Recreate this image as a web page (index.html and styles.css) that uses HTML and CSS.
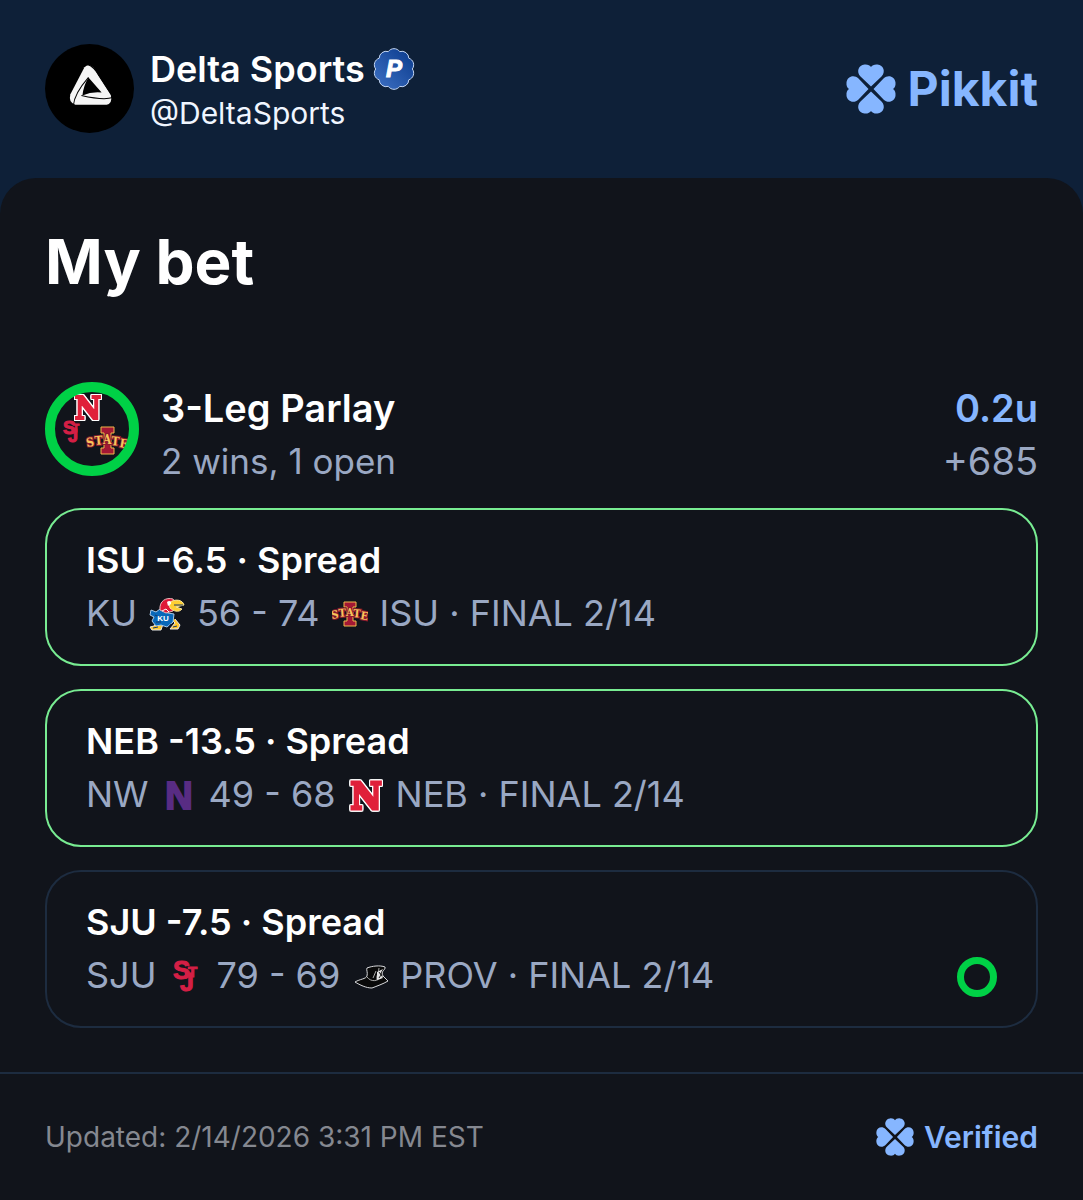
FILE: index.html
```html
<!DOCTYPE html>
<html lang="en">
<head>
    <meta charset="UTF-8">
    <meta name="viewport" content="width=device-width, initial-scale=1.0">
    <title>My bet - Pikkit</title>
    <link rel="stylesheet" href="styles.css">
</head>
<body>
    <header class="header">
        <svg class="avatar" viewBox="0 0 88 88" role="img" aria-label="Delta Sports logo">
            <circle cx="44" cy="44" r="44" fill="#000"/>
            <path d="M39 23Q44 18 49 25L65 50Q67 59 61 60H30Q23 58 25 50Z" fill="#f5f5f5"/>
            <path d="M43 33L56 48Q46 47 37 51Q38 41 43 33Z" fill="#000"/>
            <path d="M42 20Q49 23 53 31L66 51M67 53Q58 56 36 51M28 61Q29 49 43 33" fill="none" stroke="#000" stroke-width="1"/>
        </svg>
        <div class="user">
            <div class="user-name">
                Delta Sports
                <svg class="badge" viewBox="0 0 42 42" role="img" aria-label="Pro">
                    <defs>
                        <linearGradient id="badgeFill" x1="0" y1="1" x2="1" y2="0">
                            <stop offset="0" stop-color="#3f72c5"/>
                            <stop offset="1" stop-color="#09398b"/>
                        </linearGradient>
                    </defs>
                    <path d="M39.300 21A7 7 0 0 1 35.800 31.800A7 7 0 0 1 26.700 38.400A7 7 0 0 1 15.300 38.400A7 7 0 0 1 6.200 31.800A7 7 0 0 1 2.700 21A7 7 0 0 1 6.200 10.200A7 7 0 0 1 15.300 3.600A7 7 0 0 1 26.700 3.600A7 7 0 0 1 35.800 10.200A7 7 0 0 1 39.300 21Z" fill="url(#badgeFill)" stroke="#c3d6f4" stroke-width="1" stroke-linejoin="round"/>
                    <text class="block" x="21" y="29" font-size="24" font-style="italic" text-anchor="middle" fill="#fff" stroke="#fff" stroke-width="1">P</text>
                </svg>
            </div>
            <div class="user-handle">@DeltaSports</div>
        </div>
        <div class="brand">
            <svg class="brand-icon" viewBox="0 0 50 50" aria-hidden="true">
                <g id="clover">
                    <path id="leaf" d="M25 22.500L14.500 12.500C10 8 12.500 1 18.500 .5C21.500 .2 24 1.200 25 3C26 1.200 28.500 .2 31.500 .5C37.500 1 40 8 35.500 12.500Z"/>
                    <use href="#leaf" transform="rotate(90 25 25)"/>
                    <use href="#leaf" transform="rotate(180 25 25)"/>
                    <use href="#leaf" transform="rotate(270 25 25)"/>
                </g>
            </svg>
            Pikkit
        </div>
    </header>

    <main class="panel">
        <h1>My bet</h1>

        <section class="parlay">
            <svg class="parlay-icon" viewBox="0 0 94 94" aria-hidden="true">
                <text class="slab neb" x="43" y="37" font-size="32" text-anchor="middle">N</text>
                <text class="block sju" font-size="19"><tspan x="18" y="52">S</tspan><tspan x="28" y="50" font-size="10">T</tspan><tspan x="23" y="60" font-size="18">J</tspan></text>
                <path d="M56 45H69V51H66V66H69V72H56V66H59V51H56Z" fill="#a31734" stroke="#f2b84b" stroke-width="1"/>
                <text class="slab state" x="42 50 58 66 74" y="65 63 62 63 65" rotate="-10 -5 0 5 10" font-size="12">STATE</text>
                <circle cx="47" cy="47" r="42" fill="none" stroke="#00d146" stroke-width="10"/>
            </svg>
            <div class="parlay-info">
                <h2>3-Leg Parlay</h2>
                <p>2 wins, 1 open</p>
            </div>
            <div class="parlay-odds">
                <div class="units">0.2u</div>
                <div class="odds">+685</div>
            </div>
        </section>

        <ul class="legs">
            <li class="leg won">
                <div>
                    <h3>ISU -6.5 · Spread</h3>
                    <p class="score">
                        KU
                        <svg viewBox="0 0 36 36" aria-hidden="true">
                            <path d="M9 25L5 30L1 31L3 34H12L14 28M23 24L26 27L21 33H29L31 29L26 23" fill="#ffc82d" stroke="#e8e8e8" stroke-width="1"/>
                            <path d="M2 14L7 16L11 13L19 17L25 18L24 26L18 31L12 29L7 30L3 25L5 21L1 19Z" fill="#0868b9" stroke="#a9c9e8" stroke-width="1"/>
                            <path d="M11 14C10 5 17 1 24 3L27 8L24 15L17 17Z" fill="#df1938" stroke="#e8b9bd" stroke-width="1"/>
                            <path d="M20 7C26 2 34 4 35 9L27 11L33 13C30 17 24 15 21 12Z" fill="#ffcf32" stroke="#f6e39d" stroke-width="1"/>
                            <path d="M18 6C20 4 23 5 22 8L19 10Z" fill="#fff"/>
                            <path d="M25 9L34 9M6 19L10 21M7 26L12 26M22 28L19 31M4 32L9 31M24 31L28 30" fill="none" stroke="#183668" stroke-width="1"/>
                            <path d="M13 15L17 13L20 16" fill="none" stroke="#fff" stroke-width="1"/>
                            <text class="block" x="14" y="25" font-size="8" text-anchor="middle" fill="#fff">KU</text>
                        </svg>
                        56 - 74
                        <svg viewBox="0 0 36 36" aria-hidden="true">
                            <path d="M12 6H24V11H21V25H24V30H12V25H15V11H12Z" fill="#a31734" stroke="#f2b84b" stroke-width="1"/>
                            <text class="slab state" x="0 7 14 21 28" y="23 21 20 21 23" rotate="-10 -5 0 5 10" font-size="11">STATE</text>
                        </svg>
                        ISU · FINAL 2/14
                    </p>
                </div>
            </li>
            <li class="leg won">
                <div>
                    <h3>NEB -13.5 · Spread</h3>
                    <p class="score">
                        NW
                        <svg viewBox="0 0 36 36" aria-hidden="true">
                            <text class="block nw" x="18" y="32" font-size="38" text-anchor="middle">N</text>
                        </svg>
                        49 - 68
                        <svg viewBox="0 0 36 36" aria-hidden="true">
                            <text class="slab neb" x="18" y="32" font-size="38" text-anchor="middle">N</text>
                        </svg>
                        NEB · FINAL 2/14
                    </p>
                </div>
            </li>
            <li class="leg">
                <div>
                    <h3>SJU -7.5 · Spread</h3>
                    <p class="score">
                        SJU
                        <svg viewBox="0 0 36 36" aria-hidden="true">
                            <text class="block sju" font-size="26"><tspan x="5" y="21">S</tspan><tspan x="20" y="19" font-size="15">T</tspan><tspan x="12" y="33" font-size="25">J</tspan></text>
                        </svg>
                        79 - 69
                        <svg viewBox="0 0 36 36" aria-hidden="true">
                            <path d="M3 24C8 21 14 21 15 18C16 14 14 12 15 10C20 8 28 7 33 9C34 12 28 13 31 18L36 23C31 26 25 28 20 30C14 30 8 27 3 24Z" fill="#090909" stroke="#d9dadd" stroke-width="1"/>
                            <path d="M15 19C19 24 25 24 31 18M21 20L24 13M25 22C24 17 27 15 27 10" fill="none" stroke="#aaa" stroke-width="1"/>
                            <path d="M25 14L31 11L28 16L31 20L25 22Z" fill="#e4e4e4"/>
                            <path d="M27 14L29 17L27 20" fill="none" stroke="#222" stroke-width="1"/>
                        </svg>
                        PROV · FINAL 2/14
                    </p>
                </div>
                <span class="ring"></span>
            </li>
        </ul>
    </main>

    <footer class="footer">
        <span>Updated: 2/14/2026 3:31 PM EST</span>
        <span class="verified">
            <svg class="verified-icon" viewBox="0 0 50 50" aria-hidden="true"><use href="#clover"/></svg>
            Verified
        </span>
    </footer>
</body>
</html>
```
FILE: styles.css
```css
* {
    box-sizing: border-box;
}
body {
    margin: 0;
    min-height: 100vh;
    display: flex;
    flex-direction: column;
    font-family: Inter, "Liberation Sans", sans-serif;
    font-size: 36px;
    line-height: 53px;
    color: #fff;
    background: #0e2038;
}
h1, h2, h3, p, ul {
    margin: 0;
    padding: 0;
    font-size: inherit;
}
h2, h3 {
    font-weight: 600;
}
p, .odds {
    color: #9aa8c3;
}
svg {
    flex: none;
}

/* team logos */
.slab {
    font-family: "DejaVu Serif Condensed", "DejaVu Serif", serif;
    font-weight: bold;
}
.block {
    font-family: "Liberation Sans", sans-serif;
    font-weight: bold;
}
.neb {
    fill: #e0203a;
    stroke: #e0203a;
    stroke-width: 3;
    filter: drop-shadow(1px 0 0 #fff) drop-shadow(-1px 0 0 #fff) drop-shadow(0 1px 0 #fff) drop-shadow(0 -1px 0 #fff);
}
.parlay-icon .neb {
    stroke-width: 2;
}
.nw {
    fill: #582c83;
    stroke: #582c83;
    stroke-width: 2;
}
.sju {
    fill: #d41f45;
    stroke: #d41f45;
    stroke-width: 1;
}
.state {
    fill: #f7c65b;
    stroke: #8c1a2e;
    stroke-width: 2;
    paint-order: stroke;
}

.header {
    display: flex;
    align-items: center;
    padding: 44px 45px 45px;
}
.avatar {
    width: 89px;
    height: 89px;
}
.user {
    flex: 1;
    margin-left: 16px;
}
.user-name {
    display: flex;
    align-items: center;
    gap: 8px;
    font-weight: 600;
    line-height: 48px;
}
.badge {
    width: 42px;
    height: 42px;
}
.user-handle {
    font-size: 30px;
    line-height: 40px;
    color: #f0f6ff;
}
.brand {
    display: flex;
    align-items: center;
    gap: 12px;
    font-size: 48px;
    font-weight: 700;
    color: #86b6ff;
}
.brand-icon {
    width: 50px;
    height: 50px;
    fill: currentColor;
}
.panel {
    padding: 44px 45px;
    background: #11141b;
    border-radius: 36px 36px 0 0;
}
h1 {
    font-size: 62px;
    line-height: 80px;
    margin-bottom: 80px;
}
.parlay {
    display: flex;
    align-items: flex-start;
    margin-bottom: 20px;
}
.parlay-icon {
    width: 94px;
    height: 94px;
}
.parlay-info {
    flex: 1;
    margin-left: 22px;
}
.parlay-info p {
    font-size: 35px;
}
h2, .units, .odds {
    font-size: 38px;
}
.parlay-odds {
    text-align: right;
}
.units {
    font-weight: 600;
    color: #86b6ff;
}
.legs {
    display: flex;
    flex-direction: column;
    gap: 23px;
    list-style: none;
}
.leg {
    display: flex;
    align-items: flex-end;
    justify-content: space-between;
    padding: 24px 39px;
    border: 2px solid #1d2c40;
    border-radius: 36px;
}
.leg.won {
    border-color: #78ec92;
}
.score {
    display: flex;
    align-items: center;
    gap: 12px;
}
.score svg {
    width: 36px;
    height: 36px;
}
.ring {
    width: 40px;
    height: 40px;
    margin-bottom: 5px;
    border: 7px solid #00d146;
    border-radius: 50%;
}
.footer {
    flex: 1;
    display: flex;
    align-items: center;
    justify-content: space-between;
    padding: 36px 45px;
    border-top: 2px solid #1d2c40;
    background: #11141b;
    font-size: 28px;
    color: #858890;
}
.verified {
    display: flex;
    align-items: center;
    gap: 10px;
    font-size: 30px;
    font-weight: 600;
    color: #86b6ff;
}
.verified-icon {
    width: 38px;
    height: 38px;
    fill: currentColor;
}
```
